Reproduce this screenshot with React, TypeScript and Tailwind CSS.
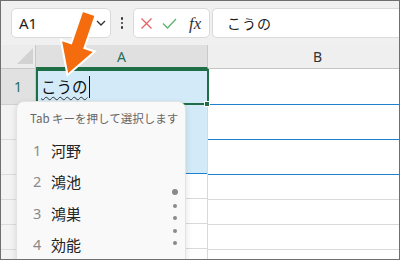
import React from "react";

const FONT = '"Noto Sans", "Noto Sans CJK JP", sans-serif';
const JP = '"Noto Sans CJK JP", "Noto Sans", sans-serif';

function RowHead({ n, h, sel }: { n?: number; h: string; sel?: boolean }) {
  return (
    <div
      className={`${h} w-[35px] shrink-0 border-r border-b flex items-center justify-center text-[14px] ${
        sel ? "bg-[#e1e1e1] border-r-[#c8c8c8] border-b-[#d0d0d0] text-[#1e6f5c]" : "bg-[#f3f3f3] border-r-[#d4d4d4] border-b-[#dcdcdc] text-[#444] pl-[6px]"
      }`}
    >
      {n}
    </div>
  );
}

export default function App() {
  const items = ["河野", "鴻池", "鴻巣", "効能"];
  return (
    <div
      className="relative w-[400px] h-[260px] overflow-hidden border border-[#6f6f6f] bg-white"
      style={{ fontFamily: FONT }}
    >
      {/* toolbar */}
      <div className="h-[44px] bg-[#f0f0f0] flex items-center pl-[10px] gap-0">
        <div className="w-[100px] h-[30px] bg-white border border-[#dadada] rounded-[5px] flex items-center justify-between pl-[7px] pr-[3px]">
          <span className="text-[15px] text-[#222]">A1</span>
          <svg width="12" height="12" viewBox="0 0 12 12">
            <polyline points="2,4 6,8 10,4" fill="none" stroke="#333" strokeWidth="1.3" />
          </svg>
        </div>
        <div className="w-[22px] flex flex-col items-center gap-[2px]">
          <span className="w-[2.5px] h-[2.5px] rounded-full bg-[#333]" />
          <span className="w-[2.5px] h-[2.5px] rounded-full bg-[#333]" />
          <span className="w-[2.5px] h-[2.5px] rounded-full bg-[#333]" />
        </div>
        <div className="w-[77px] h-[30px] bg-white border border-[#dadada] rounded-[5px] flex items-center pl-[6px] gap-[9px]">
          <svg width="13" height="13" viewBox="0 0 13 13">
            <line x1="1.5" y1="1.5" x2="11.5" y2="11.5" stroke="#e46262" strokeWidth="1.3" />
            <line x1="11.5" y1="1.5" x2="1.5" y2="11.5" stroke="#e46262" strokeWidth="1.3" />
          </svg>
          <svg width="15" height="13" viewBox="0 0 15 13">
            <polyline points="1,6.5 5.5,11 14,2" fill="none" stroke="#5cb36a" strokeWidth="1.3" />
          </svg>
          <span
            className="text-[17px] italic text-[#333] leading-none ml-[3px]"
            style={{ fontFamily: '"Liberation Serif", serif' }}
          >
            fx
          </span>
        </div>
        <div className="flex-1 h-[30px] ml-[2px] bg-white border border-[#dadada] border-r-0 rounded-l-[5px] flex items-center pl-[14px]">
          <span className="text-[14px] text-[#222] tracking-[1px]" style={{ fontFamily: JP }}>
            こうの
          </span>
        </div>
      </div>

      {/* column header row */}
      <div className="h-[24px] flex">
        <div className="w-[35px] shrink-0 bg-[#ececec] border-r border-[#c8c8c8] border-b border-b-[#c8c8c8] relative">
          <svg className="absolute left-[15px] top-[2px]" width="18" height="18" viewBox="0 0 18 18">
            <polygon points="17,1 17,17 1,17" fill="#d2d2d2" />
          </svg>
        </div>
        <div className="w-[172px] shrink-0 bg-[#e0e0e0] border-r border-[#c8c8c8] border-b-2 border-b-[#1e6f45] flex items-center justify-center text-[14px] text-[#1e6f5c]">
          A
        </div>
        <div className="flex-1 bg-[#efefef] border-b border-[#c4c4c4] flex items-center justify-center pl-[28px] text-[14px] text-[#333]">
          B
        </div>
      </div>

      {/* body */}
      <div className="flex">
        <div className="flex flex-col">
          <RowHead n={1} h="h-[36px]" sel />
          <RowHead n={2} h="h-[35px]" />
          <RowHead n={3} h="h-[35px]" />
          <RowHead n={4} h="h-[25px]" />
          <RowHead n={5} h="h-[25px]" />
          <RowHead n={6} h="h-[25px]" />
          <RowHead h="h-[25px]" />
        </div>
        <div className="w-[172px] shrink-0 flex flex-col border-r border-[#d9d9d9]">
          <div className="h-[105px] bg-[#d3ebf8] border-b border-[#1f80d0] pl-[5px] pt-[4px]">
            <div className="flex items-center h-[27px]">
              <span
                className="text-[15.5px] text-[#111] underline decoration-wavy decoration-[#333] decoration-[1px] underline-offset-[3px]"
                style={{ fontFamily: JP }}
              >
                こうの
              </span>
              <span className="w-[1px] h-[22px] bg-[#111] ml-[1px]" />
            </div>
          </div>
          <div className="h-[25px] border-b border-[#d9d9d9]" />
          <div className="h-[25px] border-b border-[#d9d9d9]" />
          <div className="h-[25px] border-b border-[#d9d9d9]" />
          <div className="h-[25px] border-b border-[#d9d9d9]" />
        </div>
        <div className="flex-1 flex flex-col">
          <div className="h-[36px] border-b border-[#1f80d0]" />
          <div className="h-[35px] border-b border-[#1f80d0]" />
          <div className="h-[35px] border-b border-[#1f80d0]" />
          <div className="h-[25px] border-b border-[#d9d9d9]" />
          <div className="h-[25px] border-b border-[#d9d9d9]" />
          <div className="h-[25px] border-b border-[#d9d9d9]" />
          <div className="h-[25px] border-b border-[#d9d9d9]" />
        </div>
      </div>

      {/* selection border on A1 */}
      <div className="absolute left-[35px] top-[68px] w-[173px] h-[36px] border-2 border-[#1e6f45] pointer-events-none" />
      <div className="absolute left-[203px] top-[100px] w-[6px] h-[6px] bg-[#1e6f45] border border-white pointer-events-none" />

      {/* autocomplete popup */}
      <div
        className="absolute left-[15px] top-[100px] w-[170px] h-[180px] bg-[#f9f9f9] border border-[#e3e3e3] rounded-[8px] shadow-[0_2px_6px_rgba(0,0,0,0.12)]"
        style={{ fontFamily: JP }}
      >
        <div className="pl-[13px] pt-[8px] text-[11.5px] text-[#666] h-[33px]">Tab キーを押して選択します</div>
        <div className="flex flex-col">
          {items.map((t, i) => (
            <div key={t} className="h-[31.5px] flex items-center pl-[16px]">
              <span className="w-[18px] text-[14.5px] text-[#8a8a8a]" style={{ fontFamily: FONT }}>
                {i + 1}
              </span>
              <span className="text-[15px] text-[#222]">{t}</span>
            </div>
          ))}
        </div>
        <div className="absolute left-[155px] top-[87px] flex flex-col items-center gap-[8.5px]">
          <span className="w-[6px] h-[6px] rounded-full bg-[#8a8a8a]" />
          <span className="w-[4px] h-[4px] rounded-full bg-[#8a8a8a]" />
          <span className="w-[4px] h-[4px] rounded-full bg-[#8a8a8a]" />
          <span className="w-[4px] h-[4px] rounded-full bg-[#8a8a8a]" />
          <span className="w-[4px] h-[4px] rounded-full bg-[#8a8a8a]" />
        </div>
      </div>

      {/* orange arrow */}
      <svg className="absolute left-0 top-0 pointer-events-none" width="400" height="260" viewBox="0 0 400 260">
        <polygon
          points="94.6,14.3 81.4,9.7 70.2,42.3 59.8,38.8 66.5,74 93.8,50.5 83.4,47"
          fill="#f46c0e"
          stroke="#ffffff"
          strokeWidth="2"
          strokeLinejoin="miter"
        />
      </svg>
    </div>
  );
}
